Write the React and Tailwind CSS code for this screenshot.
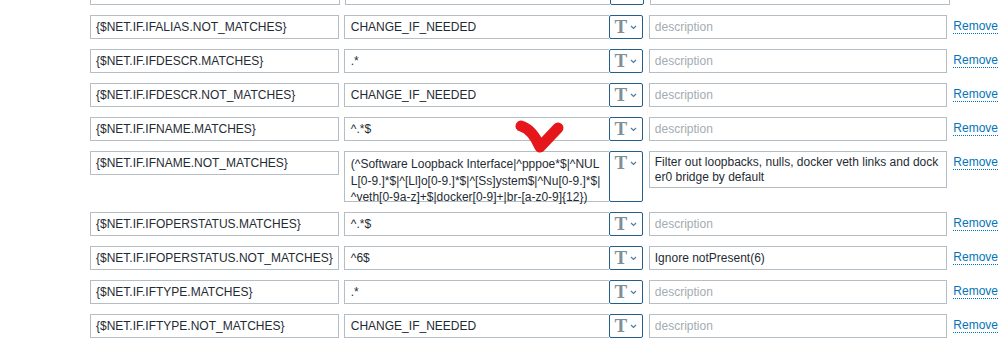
import React from 'react'

const rows = [
  { macro: '', value: '', desc: '', hidden: true },
  { macro: '{$NET.IF.IFALIAS.NOT_MATCHES}', value: 'CHANGE_IF_NEEDED', desc: '' },
  { macro: '{$NET.IF.IFDESCR.MATCHES}', value: '.*', desc: '' },
  { macro: '{$NET.IF.IFDESCR.NOT_MATCHES}', value: 'CHANGE_IF_NEEDED', desc: '' },
  { macro: '{$NET.IF.IFNAME.MATCHES}', value: '^.*$', desc: '' },
  {
    macro: '{$NET.IF.IFNAME.NOT_MATCHES}',
    value: [
      '(^Software Loopback Interface|^pppoe*$|^NUL',
      'L[0-9.]*$|^[Ll]o[0-9.]*$|^[Ss]ystem$|^Nu[0-9.]*$|',
      '^veth[0-9a-z]+$|docker[0-9]+|br-[a-z0-9]{12})',
    ],
    desc: ['Filter out loopbacks, nulls, docker veth links and dock', 'er0 bridge by default'],
  },
  { macro: '{$NET.IF.IFOPERSTATUS.MATCHES}', value: '^.*$', desc: '' },
  { macro: '{$NET.IF.IFOPERSTATUS.NOT_MATCHES}', value: '^6$', desc: 'Ignore notPresent(6)' },
  { macro: '{$NET.IF.IFTYPE.MATCHES}', value: '.*', desc: '' },
  { macro: '{$NET.IF.IFTYPE.NOT_MATCHES}', value: 'CHANGE_IF_NEEDED', desc: '' },
]

function TypeButton({ tall, hidden }) {
  return (
    <div
      className={`w-[34px] shrink-0 border border-[#245f8c] rounded-[2px] bg-white flex items-start justify-center gap-[3px] ${tall ? 'h-[51px]' : 'h-6'}`}
    >
      {!hidden && (
        <>
          <span className="text-[19px] leading-[22px] font-bold text-[#7d8f99] [font-family:'Liberation_Serif',serif]">T</span>
          <svg width="7" height="5" viewBox="0 0 7 5" className="mt-[9px]">
            <path d="M1 1 L3.5 3.5 L6 1" fill="none" stroke="#4b7fa6" strokeWidth="1.2" />
          </svg>
        </>
      )}
    </div>
  )
}

function Row({ macro, value, desc, hidden }) {
  const tall = Array.isArray(value)
  return (
    <div className="flex items-start">
      <div className="w-[250px] h-6 ml-[90px] border border-[#b4bec4] px-[5px] flex items-center text-[#1f2c33] whitespace-nowrap overflow-hidden">
        {macro}
      </div>
      <div className="flex ml-[5px]">
        {tall ? (
          <div className="w-[265px] h-[51px] border border-[#b4bec4] border-r-0 pl-[6px] pt-[4px] leading-[16.5px] text-[#1f2c33]">
            {value.map(l => <div key={l} className="whitespace-nowrap">{l}</div>)}
          </div>
        ) : (
          <div className="w-[265px] h-6 border border-[#b4bec4] border-r-0 pl-[6px] flex items-center text-[#1f2c33]">
            {value}
          </div>
        )}
        <TypeButton tall={tall} hidden={hidden} />
      </div>
      {Array.isArray(desc) ? (
        <div className="w-[300px] h-[37px] ml-[6px] border border-[#b4bec4] px-[5px] pt-[3px] leading-[15px] text-[#1f2c33]">
          {desc.map(l => <div key={l} className="whitespace-nowrap">{l}</div>)}
        </div>
      ) : (
        <div className={`w-[300px] h-6 ml-[6px] border border-[#b4bec4] px-[5px] flex items-center ${desc ? 'text-[#1f2c33]' : 'text-[#a4acb1]'}`}>
          {hidden ? '' : desc || 'description'}
        </div>
      )}
      <div className="ml-[6px] h-6 flex items-center shrink-0">
        {!hidden && (
          <span className="text-[#0275b8] border-b border-dotted border-[#0275b8] leading-[13px]">Remove</span>
        )}
      </div>
    </div>
  )
}

export default function App() {
  return (
    <div className="relative w-[998px] h-[344px] overflow-hidden bg-white text-[12px] [font-family:'Liberation_Sans',Arial,sans-serif]">
      <div className="flex flex-col gap-[10px] mt-[-19px]">
        {rows.map((r, i) => (
          <Row key={i} {...r} />
        ))}
      </div>
      {/* hand-drawn annotation arrow */}
      <svg className="absolute left-0 top-0 pointer-events-none" width="998" height="344">
        <path
          d="M521 126 Q532 129 540 147 L558 128"
          fill="none"
          stroke="#e5171b"
          strokeWidth="11"
          strokeLinecap="round"
          strokeLinejoin="round"
        />
      </svg>
    </div>
  )
}
